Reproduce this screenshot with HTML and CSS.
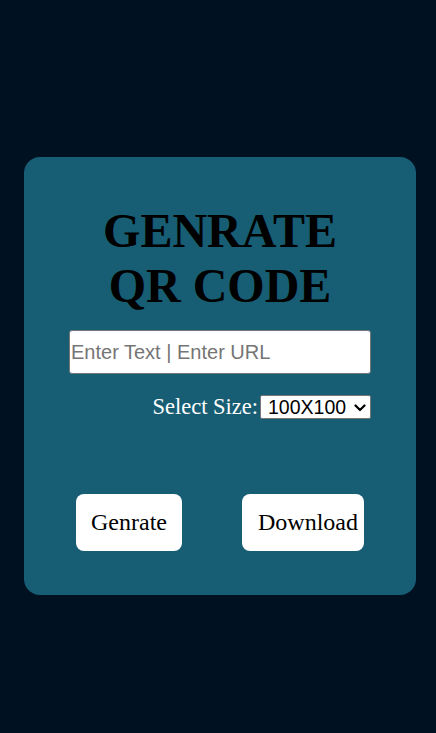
FILE: index.html
```html
<!DOCTYPE html>
<html>
<head>
<meta charset="utf-8">
<link rel="stylesheet" href="styles.css">
</head>
<body>
<div class="page">
  <div class="card">
    <h1 class="title">GENRATE<br>QR CODE</h1>
    <input class="text-input" type="text" placeholder="Enter Text | Enter URL">
    <div class="size-row">
      <label class="size-label">Select Size:</label>
      <div class="select-wrap">
        <select class="size-select"><option>100X100</option></select>
        <svg class="chevron" width="12" height="8" viewBox="0 0 12 8"><path d="M1.5 1.5 L6 6 L10.5 1.5" fill="none" stroke="#000" stroke-width="2.2" stroke-linecap="round" stroke-linejoin="round"/></svg>
      </div>
    </div>
    <div class="buttons">
      <button class="btn btn-gen">Genrate</button>
      <button class="btn btn-dl">Download</button>
    </div>
  </div>
</div>
</body>
</html>
```
FILE: styles.css
```css
html, body {
  margin: 0;
  padding: 0;
  background: #001121;
  height: 100%;
}
.page {
  padding: 157px 20px 0 24px;
  box-sizing: border-box;
}
.card {
  width: 392px;
  height: 438px;
  box-sizing: border-box;
  background: #175e74;
  border-radius: 16px;
  display: flex;
  flex-direction: column;
  align-items: center;
  padding-top: 46px;
  font-family: "Liberation Serif", serif;
}
.title {
  margin: 0;
  font-family: "Liberation Serif", serif;
  font-weight: bold;
  font-size: 48px;
  line-height: 55px;
  text-align: center;
  color: #000;
}
.text-input {
  margin-top: 17px;
  width: 302px;
  height: 44px;
  box-sizing: border-box;
  border: 1px solid #767676;
  border-radius: 3px;
  padding: 0 1px;
  font-family: "Liberation Sans", sans-serif;
  font-size: 20px;
  background: #fff;
  outline: none;
}
.text-input::placeholder {
  color: #757575;
}
.size-row {
  margin-top: 20px;
  width: 302px;
  display: flex;
  justify-content: flex-end;
  align-items: center;
}
.size-label {
  color: #fff;
  font-size: 22.5px;
  margin-right: 2px;
}
.select-wrap {
  position: relative;
  width: 111px;
  height: 24px;
}
.size-select {
  -webkit-appearance: none;
  appearance: none;
  width: 111px;
  height: 24px;
  box-sizing: border-box;
  font-family: "Liberation Sans", sans-serif;
  font-size: 19.5px;
  line-height: 22px;
  border: 1px solid #767676;
  border-radius: 2px;
  background: #fff;
  padding: 0 0 0 7px;
  color: #000;
  outline: none;
}
.chevron {
  position: absolute;
  right: 5px;
  top: 9px;
  pointer-events: none;
}
.buttons {
  margin-top: 74px;
  display: flex;
  gap: 60px;
}
.btn {
  height: 57px;
  border: none;
  border-radius: 8px;
  background: #fff;
  font-family: "Liberation Serif", serif;
  font-size: 24px;
  color: #000;
  padding: 0;
}
.btn-gen {
  width: 106px;
}
.btn-dl {
  width: 122px;
  text-align: left;
  padding-left: 16px;
}
```
